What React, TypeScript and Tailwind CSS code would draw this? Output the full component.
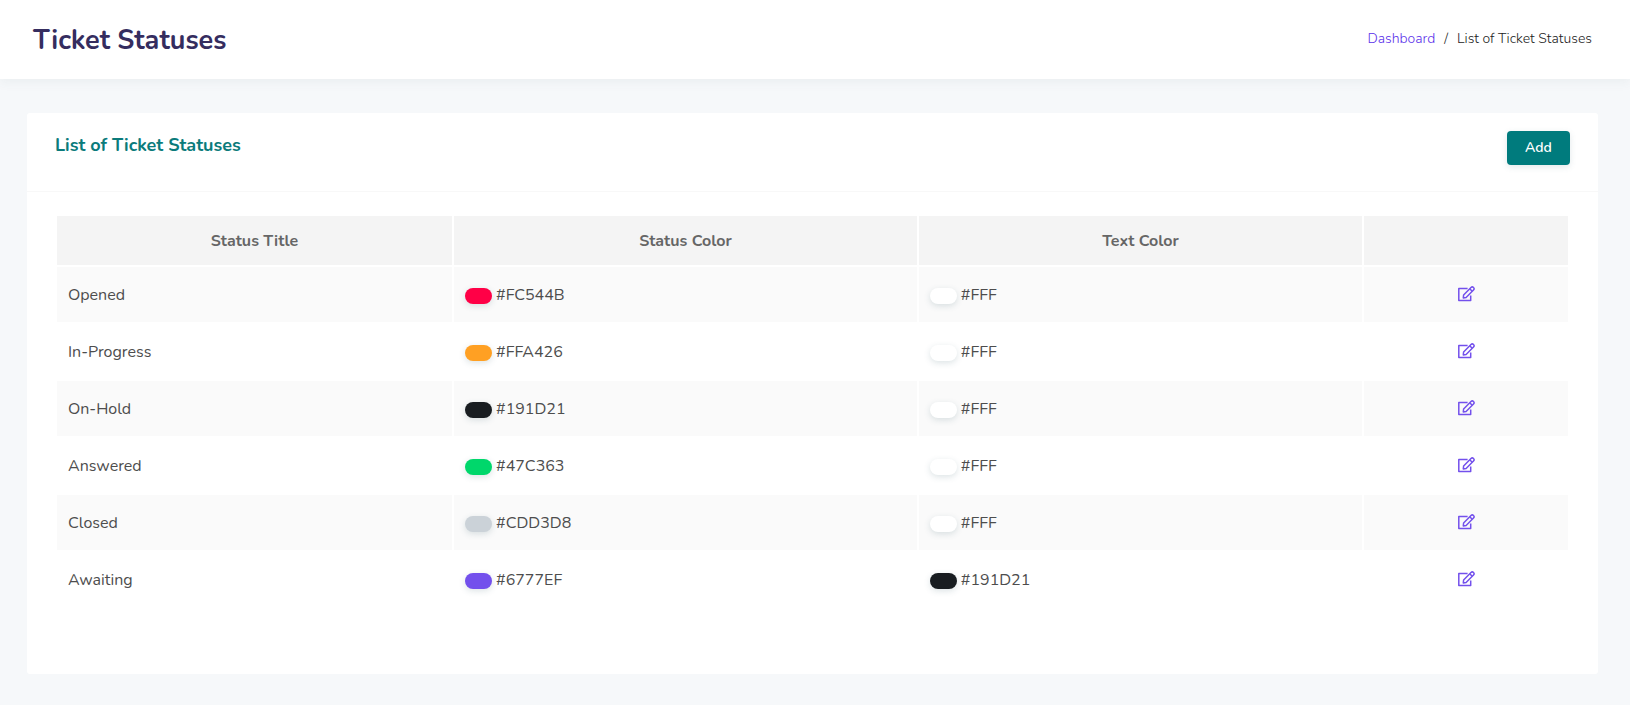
type Swatch = { label: string; fill: string };
type Status = { title: string; color: Swatch; text: Swatch };

const white: Swatch = { label: "#FFF", fill: "bg-white" };
const dark: Swatch = { label: "#191D21", fill: "bg-[#191d21]" };

const statuses: Status[] = [
  { title: "Opened", color: { label: "#FC544B", fill: "bg-[#ff0046]" }, text: white },
  { title: "In-Progress", color: { label: "#FFA426", fill: "bg-[#ffa023]" }, text: white },
  { title: "On-Hold", color: dark, text: white },
  { title: "Answered", color: { label: "#47C363", fill: "bg-[#00d76b]" }, text: white },
  { title: "Closed", color: { label: "#CDD3D8", fill: "bg-[#cbd2d8]" }, text: white },
  { title: "Awaiting", color: { label: "#6777EF", fill: "bg-[#7350ec]" }, text: dark },
];

function EditIcon() {
  return (
    <svg
      width="17"
      height="16"
      viewBox="0 0 17 16"
      fill="none"
      stroke="currentColor"
      strokeWidth="1.5"
      strokeLinejoin="round"
      aria-hidden="true"
    >
      <path d="M9.6 2.5H0.8V14.5H12.7V9.5" />
      <path d="M5.3 11.9L5.6 9L13 1.5A1.6 1.6 0 0 1 15.5 4L8.1 11.5Z" />
      <path d="M11.7 2.8L14.2 5.3" />
    </svg>
  );
}

function ColorCell({ swatch }: { swatch: Swatch }) {
  return (
    <td className="h-[55px] px-[11px]">
      <div className="flex items-center gap-1">
        <span
          className={`mt-[3px] h-4 w-[27px] rounded-full shadow-[0_2px_6px_rgba(60,100,110,0.18)] ${swatch.fill}`}
        />
        <span>{swatch.label}</span>
      </div>
    </td>
  );
}

export default function App() {
  return (
    <div className="min-h-screen bg-[#f6f8fa] pb-[31px] font-['Nunito','Lato',sans-serif] text-base text-[#4d4d4d]">
      <header className="flex items-center justify-between bg-white pt-[21px] pb-[19px] pr-[38px] pl-[33px] shadow-[0_4px_10px_rgba(60,100,110,0.06)]">
        <h1 className="text-[27px] leading-[39px] font-bold text-[#352d5f]">Ticket Statuses</h1>
        <nav aria-label="Breadcrumb" className="pb-1">
          <ol className="flex gap-[9px] text-sm font-light text-[#222222]">
            <li>
              <a href="#dashboard" className="text-[#5a30ea]">Dashboard</a>
            </li>
            <li aria-hidden="true">/</li>
            <li>List of Ticket Statuses</li>
          </ol>
        </nav>
      </header>

      <main className="pt-[34px] pr-8 pl-[27px]">
        <section className="rounded-[3px] bg-white">
          <div className="flex items-start justify-between border-b border-[#f8f8f8] px-7 pt-[18px] pb-[26px]">
            <h2 className="text-lg leading-7 font-bold text-[#0b7b7b]">List of Ticket Statuses</h2>
            <button
              type="button"
              className="h-[34px] w-[63px] rounded bg-[#007b7d] text-sm font-semibold text-white shadow-[0_2px_6px_rgba(60,100,110,0.15)]"
            >
              Add
            </button>
          </div>

          <div className="px-7 pt-[22px] pb-[65px]">
            <table className="w-full table-fixed border-separate border-spacing-[2px]">
              <colgroup>
                <col className="w-[26.25%]" />
                <col className="w-[30.75%]" />
                <col className="w-[29.45%]" />
                <col className="w-[13.55%]" />
              </colgroup>
              <thead>
                <tr className="bg-[#f4f4f4] text-[#666666]">
                  <th scope="col" className="h-[49px] font-bold">Status Title</th>
                  <th scope="col" className="h-[49px] font-bold">Status Color</th>
                  <th scope="col" className="h-[49px] font-bold">Text Color</th>
                  <td className="h-[49px]" />
                </tr>
              </thead>
              <tbody>
                {statuses.map((status) => (
                  <tr key={status.title} className="odd:bg-[#fafafa]">
                    <td className="h-[55px] px-[11px]">{status.title}</td>
                    <ColorCell swatch={status.color} />
                    <ColorCell swatch={status.text} />
                    <td className="h-[55px] pb-[2px]">
                      <a
                        href="#edit"
                        aria-label={`Edit ${status.title}`}
                        className="flex justify-center text-[#7350ec]"
                      >
                        <EditIcon />
                      </a>
                    </td>
                  </tr>
                ))}
              </tbody>
            </table>
          </div>
        </section>
      </main>
    </div>
  );
}
